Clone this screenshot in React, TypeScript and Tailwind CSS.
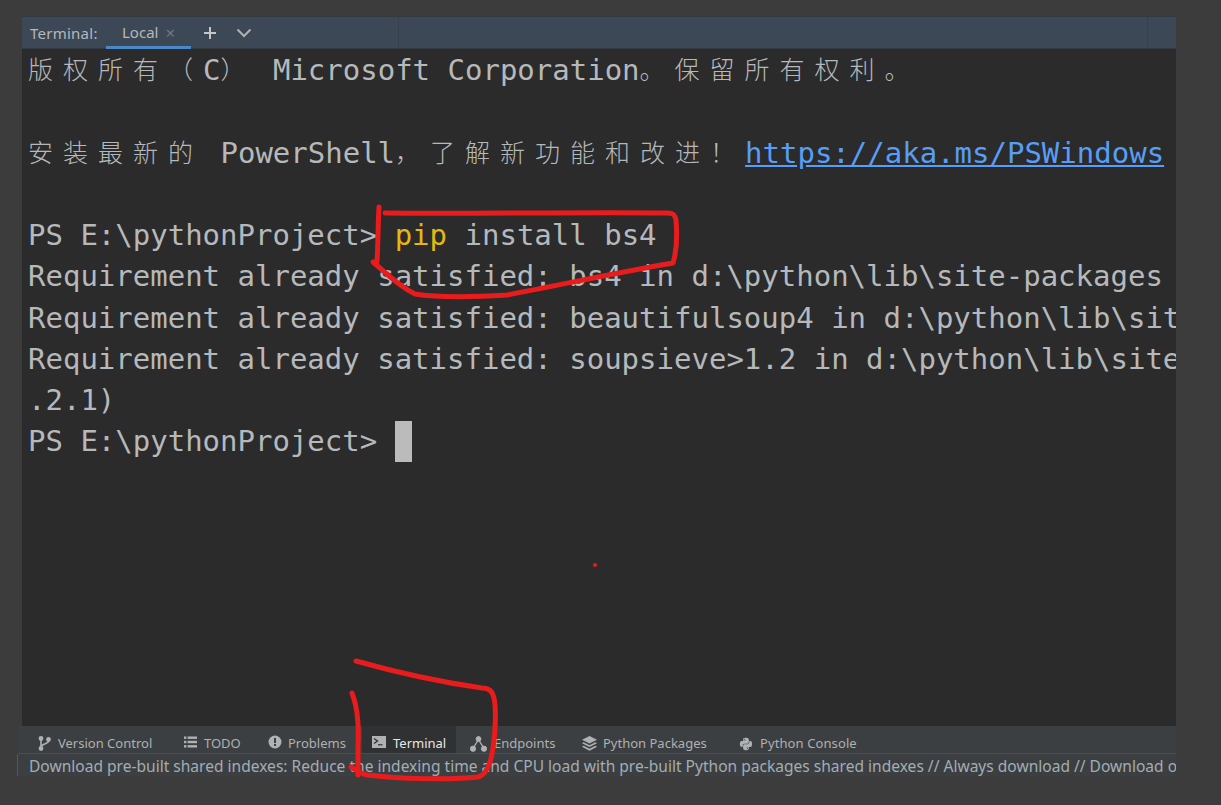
import { FaPython } from 'react-icons/fa'

const mono = 'font-["DejaVu_Sans_Mono","Liberation_Mono",monospace]'

function Cjk({ text }: { text: string }) {
  return (
    <>
      {text.split('').map((c, i) => (
        <span key={i} className='inline-block w-[35px] -translate-y-px text-[25px] font-["Noto_Sans_CJK_SC",sans-serif] font-light text-left leading-none'>
          {c}
        </span>
      ))}
    </>
  )
}

function Line({ children }: { children?: React.ReactNode }) {
  return <div className="h-[41.25px] leading-[41.25px] whitespace-pre overflow-hidden">{children}</div>
}

function BranchIcon() {
  return (
    <svg width="13" height="15" viewBox="0 0 13 15" fill="none" stroke="#afb1b3" strokeWidth="1.6">
      <circle cx="3" cy="2.5" r="1.6" fill="#afb1b3" />
      <circle cx="3" cy="12.5" r="1.6" fill="#afb1b3" />
      <circle cx="10.5" cy="3.5" r="1.6" fill="#afb1b3" />
      <path d="M3 3v9M10.5 5c0 3-7.5 3-7.5 6" />
    </svg>
  )
}

function ListIcon() {
  return (
    <svg width="13" height="12" viewBox="0 0 13 12" fill="#afb1b3" className="-mt-[3px]">
      <rect x="0" y="0.5" width="2.4" height="2.4" />
      <rect x="0" y="4.8" width="2.4" height="2.4" />
      <rect x="0" y="9.1" width="2.4" height="2.4" />
      <rect x="3.6" y="0.5" width="9.4" height="2.4" />
      <rect x="3.6" y="4.8" width="9.4" height="2.4" />
      <rect x="3.6" y="9.1" width="9.4" height="2.4" />
    </svg>
  )
}

function ProblemIcon() {
  return (
    <svg width="14" height="14" viewBox="0 0 14 14" className="-mt-[4px]">
      <circle cx="7" cy="7" r="6.5" fill="#afb1b3" />
      <rect x="6" y="3" width="2" height="5" fill="#3c3f41" />
      <rect x="6" y="9" width="2" height="2" fill="#3c3f41" />
    </svg>
  )
}

function TerminalIcon() {
  return (
    <svg width="14" height="12" viewBox="0 0 14 12" className="-mt-[4px]">
      <rect width="14" height="12" fill="#afb1b3" />
      <path d="M2 2.5 5.5 5 2 7.5" fill="none" stroke="#2f3133" strokeWidth="1.3" />
      <path d="M6 8.8h4.5" stroke="#2f3133" strokeWidth="1.2" />
    </svg>
  )
}

function EndpointsIcon() {
  return (
    <svg width="17" height="16" viewBox="0 0 17 16" fill="#afb1b3" stroke="#afb1b3">
      <path d="M3 12.5 8.5 3.5 14 12.5" fill="none" strokeWidth="1.4" />
      <circle cx="8.5" cy="3" r="2.4" />
      <circle cx="3" cy="12.7" r="2.6" />
      <circle cx="14" cy="12.7" r="2.6" />
    </svg>
  )
}

function LayersIcon() {
  return (
    <svg width="15" height="15" viewBox="0 0 15 15" fill="#afb1b3">
      <path d="M7.5 0 15 3.8 7.5 7.6 0 3.8z" />
      <path d="M1.6 6.2 7.5 9.2 13.4 6.2 15 7.2 7.5 11 0 7.2z" />
      <path d="M1.6 9.8 7.5 12.8 13.4 9.8 15 10.8 7.5 14.8 0 10.8z" />
    </svg>
  )
}

function ToolTab({ icon, label, className }: { icon: React.ReactNode; label: string; className: string }) {
  return (
    <div className={`flex items-center h-full pt-[8px] ${className}`}>
      {icon}
      <span className="whitespace-nowrap">{label}</span>
    </div>
  )
}

export default function App() {
  return (
    <div className='relative w-[1221px] h-[805px] overflow-hidden bg-[#3c3c3c] font-["Noto_Sans",sans-serif]'>
      <div className="flex w-[1176px] flex-col pt-[16px] pl-[18px]">
        {/* terminal header */}
        <div className="ml-[4px] flex h-[33px] items-stretch border-t border-b border-[#343a42] bg-[#3d4856] text-[15px] text-[#b4b8bc]">
          <div className="flex w-[84px] items-center pt-[2px] pl-[8px] tracking-[0.25px]">Terminal:</div>
          <div className="mb-[-1px] flex w-[85px] items-center border-b-[3px] border-[#4a88c7] pt-[2px] pl-[16px]">
            <span>Local</span>
            <span className="ml-[7px] text-[17px] leading-none text-[#6f7780]">×</span>
          </div>
          <svg className="ml-[12px] self-center" width="14" height="14" viewBox="0 0 14 14" stroke="#c4c7ca" strokeWidth="2">
            <path d="M7 1v12M1 7h12" />
          </svg>
          <svg className="ml-[19px] self-center" width="16" height="10" viewBox="0 0 16 10" fill="none" stroke="#afb1b3" strokeWidth="2">
            <path d="M1.5 1.5 8 8l6.5-6.5" />
          </svg>
          <div className="ml-[146px] w-px bg-[#37404b]" />
          <div className="flex-1" />
          <div className="w-px bg-[#37404b]" />
          <div className="w-[28px]" />
        </div>

        {/* terminal output */}
        <div className={`ml-[4px] h-[677px] overflow-hidden bg-[#2b2b2b] pt-[1px] pl-[6px] text-[29px] text-[#b6b9bc] ${mono}`}>
          <Line>
            <Cjk text="版权所有" />
            <Cjk text="（" />C<Cjk text="）" /> Microsoft Corporation<Cjk text="。保留所有权利。" />
          </Line>
          <Line />
          <Line>
            <Cjk text="安装最新的" /> PowerShell<Cjk text="，了解新功能和改进！" />
            <span className="text-[#589df6] underline">https://aka.ms/PSWindows</span>
          </Line>
          <Line />
          <Line>
            PS E:\pythonProject&gt; <span className="text-[#e3b80f]">pip</span> install bs4
          </Line>
          <Line>Requirement already satisfied: bs4 in d:\python\lib\site-packages</Line>
          <Line>Requirement already satisfied: beautifulsoup4 in d:\python\lib\site-packages</Line>
          <Line>Requirement already satisfied: soupsieve&gt;1.2 in d:\python\lib\site-packages</Line>
          <Line>.2.1)</Line>
          <Line>
            PS E:\pythonProject&gt; <span className="inline-block h-[41px] w-[17.5px] bg-[#bbbbbb] align-top" />
          </Line>
        </div>

        {/* tool windows bar */}
        <div className="flex h-[28px] items-stretch border-b border-[#4a4c4e] bg-[#3c3f41] text-[13px] text-[#aeb0b2]">
          <ToolTab className="ml-[20px] w-[130px] gap-[7px]" icon={<BranchIcon />} label="Version Control" />
          <ToolTab className="ml-[16px] w-[70px] gap-[7px]" icon={<ListIcon />} label="TODO" />
          <ToolTab className="ml-[14px] w-[80px] gap-[6px]" icon={<ProblemIcon />} label="Problems" />
          <ToolTab
            className="ml-[14px] w-[94px] gap-[7px] bg-[#2f3133] pl-[10px] text-[#e6e6e6]"
            icon={<TerminalIcon />}
            label="Terminal"
          />
          <ToolTab className="ml-[14px] w-[112px] gap-[7px]" icon={<EndpointsIcon />} label="Endpoints" />
          <ToolTab className="w-[157px] gap-[6px]" icon={<LayersIcon />} label="Python Packages" />
          <ToolTab className="gap-[7px] tracking-[0.1px]" icon={<FaPython size={14} color="#afb1b3" />} label="Python Console" />
        </div>

        {/* status bar */}
        <div className="-ml-px flex h-[22px] items-center overflow-hidden whitespace-nowrap border-l border-[#55585a] bg-[#3c3f41] pt-[4px] pl-[11px] text-[15.55px] text-[#a3adb6]">
          Download pre-built shared indexes: Reduce the indexing time and CPU load with pre-built Python packages shared indexes // Always download // Download once
        </div>
      </div>

      {/* red pen annotations */}
      <svg className="pointer-events-none absolute inset-0" width="1221" height="805" fill="none" stroke="#e81c1c" strokeWidth="5" strokeLinecap="round" strokeLinejoin="round">
        <path d="M379 207C378 225 378 245 377 262L373 262C385 272 398 286 415 294C440 298 475 297 507 295C560 285 620 272 673 263C677 250 677 232 676 220C675 214 672 213 668 213C580 212 470 214 385 213" />
        <path d="M356 661C395 672 440 682 482 688C491 688 494 693 495 705C496 720 495 735 493 748C491 762 487 775 478 777C450 780 400 779 367 775C360 773 355 770 351 767" />
        <path d="M352 693C358 708 359 725 358 745C358 755 358 765 358 775" />
        <circle cx="595" cy="565" r="2" fill="#e81c1c" stroke="none" />
      </svg>
    </div>
  )
}
